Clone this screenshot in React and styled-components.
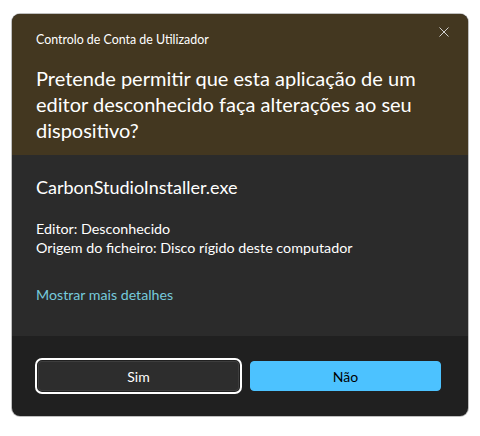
import React from "react";
import styled, { createGlobalStyle } from "styled-components";

const GlobalStyle = createGlobalStyle`
  html, body { margin: 0; padding: 0; background: #ffffff; }
  body { font-family: "Lato", "Noto Sans", sans-serif; }
  * { box-sizing: border-box; }
`;

const Dialog = styled.div`
  margin: 14px 12px;
  width: 456px;
  height: 402px;
  border-radius: 8px;
  overflow: hidden;
  display: flex;
  flex-direction: column;
  background: #202020;
  box-shadow: 0 0 0 1px rgba(0, 0, 0, 0.25);
`;

const Header = styled.div`
  background: #433720;
  padding: 0 12px 12px 24px;
`;

const TitleRow = styled.div`
  display: flex;
  justify-content: space-between;
  align-items: flex-start;
`;

const Title = styled.div`
  margin-top: 18px;
  font-size: 12.4px;
  line-height: 16px;
  color: #ffffff;
`;

const Close = styled.button`
  margin-top: 6px;
  width: 24px;
  height: 24px;
  padding: 0;
  border: 0;
  background: transparent;
  display: flex;
  align-items: center;
  justify-content: center;
  color: #d0d0d0;
`;

const Heading = styled.div`
  margin-top: 17px;
  padding-right: 12px;
  font-size: 20px;
  line-height: 26px;
  color: #ffffff;
`;

const Body = styled.div`
  background: #2b2b2b;
  padding: 20px 24px 31px;
  color: #ffffff;
`;

const FileName = styled.div`
  font-size: 18px;
  line-height: 24px;
`;

const Details = styled.div`
  margin-top: 20px;
  font-size: 14.3px;
  line-height: 19px;
`;

const Link = styled.a`
  display: block;
  margin-top: 28px;
  font-size: 14.2px;
  line-height: 20px;
  color: #76cadc;
  text-decoration: none;
`;

const Footer = styled.div`
  flex: 1;
  display: grid;
  grid-template-columns: 201px 191px;
  gap: 11px;
  padding: 25px 26px;
  align-content: start;
`;

const Button = styled.button`
  height: 30px;
  border-radius: 4px;
  font-family: inherit;
  font-size: 14px;
  padding: 0;
  border: 1px solid ${(p) => (p.$primary ? "#4cc2ff" : "rgba(255,255,255,0.08)")};
  background: ${(p) => (p.$primary ? "#4cc2ff" : "#2d2d2d")};
  color: ${(p) => (p.$primary ? "#000000" : "#ffffff")};
  outline: ${(p) => (p.$focused ? "2px solid #ffffff" : "none")};
  outline-offset: 1px;
`;

export default function App() {
  return (
    <>
      <GlobalStyle />
      <Dialog>
        <Header>
          <TitleRow>
            <Title>Controlo de Conta de Utilizador</Title>
            <Close aria-label="Fechar">
              <svg width="10" height="10" viewBox="0 0 10 10">
                <path d="M0.5 0.5 L9.5 9.5 M9.5 0.5 L0.5 9.5" stroke="currentColor" strokeWidth="1" fill="none" />
              </svg>
            </Close>
          </TitleRow>
          <Heading>
            Pretende permitir que esta aplicação de um editor desconhecido faça alterações ao seu dispositivo?
          </Heading>
        </Header>
        <Body>
          <FileName>CarbonStudioInstaller.exe</FileName>
          <Details>
            <div>Editor: Desconhecido</div>
            <div>Origem do ficheiro: Disco rígido deste computador</div>
          </Details>
          <Link href="#">Mostrar mais detalhes</Link>
        </Body>
        <Footer>
          <Button $focused>Sim</Button>
          <Button $primary>Não</Button>
        </Footer>
      </Dialog>
    </>
  );
}
